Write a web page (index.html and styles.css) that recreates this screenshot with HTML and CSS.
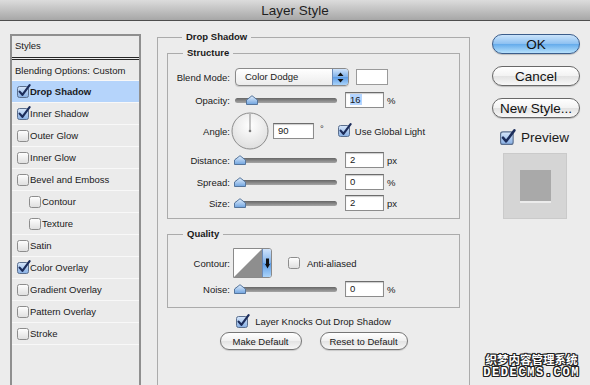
FILE: index.html
```html
<!DOCTYPE html>
<html lang="en">
<head>
   <meta charset="UTF-8">
   <meta name="viewport" content="width=device-width, initial-scale=1.0">
   <title>Layer Style</title>
   <link rel="stylesheet" href="styles.css">
</head>
<body>
<svg class="defs" aria-hidden="true">
   <defs>
      <linearGradient id="gBlue" x1="0" y1="0" x2="0" y2="1">
         <stop offset="0" stop-color="#d7e7fb"/>
         <stop offset="1" stop-color="#86aee3"/>
      </linearGradient>
      <linearGradient id="gGrey" x1="0" y1="0" x2="0" y2="1">
         <stop offset="0" stop-color="#ffffff"/>
         <stop offset="1" stop-color="#dedede"/>
      </linearGradient>
      <linearGradient id="gThumb" x1="0" y1="0" x2="0" y2="1">
         <stop offset="0" stop-color="#e4f0fd"/>
         <stop offset="1" stop-color="#6fa3df"/>
      </linearGradient>
      <radialGradient id="gDial" cx="0.5" cy="0.35" r="0.7">
         <stop offset="0" stop-color="#ffffff"/>
         <stop offset="1" stop-color="#dcdcdc"/>
      </radialGradient>
      <symbol id="cb-on" viewBox="0 0 14 14">
         <rect x="0.5" y="2.5" width="11" height="11" rx="2" fill="url(#gBlue)" stroke="#5b6f8e"/>
         <path d="M2.6 7.6 L5.4 10.8 L12.6 1.2" fill="none" stroke="#1c2d5b" stroke-width="2.2" stroke-linecap="round" stroke-linejoin="round"/>
      </symbol>
      <symbol id="cb-off" viewBox="0 0 14 14">
         <rect x="0.5" y="2.5" width="11" height="11" rx="2" fill="url(#gGrey)" stroke="#8d8d8d"/>
      </symbol>
      <symbol id="thumb" viewBox="0 0 12 10">
         <path d="M0.5 5 L6 0.7 L11.5 5 L11.5 9.5 L0.5 9.5 Z" fill="url(#gThumb)" stroke="#55759c"/>
      </symbol>
   </defs>
</svg>

<div class="window">
   <header class="titlebar">Layer Style</header>

   <div class="dialog">
      <aside class="styles">
         <div class="styles-head">Styles</div>
         <div class="style-item blending">Blending Options: Custom</div>
         <div class="style-item selected"><svg class="cb"><use href="#cb-on"/></svg>Drop Shadow</div>
         <div class="style-item"><svg class="cb"><use href="#cb-on"/></svg>Inner Shadow</div>
         <div class="style-item"><svg class="cb"><use href="#cb-off"/></svg>Outer Glow</div>
         <div class="style-item"><svg class="cb"><use href="#cb-off"/></svg>Inner Glow</div>
         <div class="style-item"><svg class="cb"><use href="#cb-off"/></svg>Bevel and Emboss</div>
         <div class="style-item sub"><svg class="cb"><use href="#cb-off"/></svg>Contour</div>
         <div class="style-item sub"><svg class="cb"><use href="#cb-off"/></svg>Texture</div>
         <div class="style-item"><svg class="cb"><use href="#cb-off"/></svg>Satin</div>
         <div class="style-item"><svg class="cb"><use href="#cb-on"/></svg>Color Overlay</div>
         <div class="style-item"><svg class="cb"><use href="#cb-off"/></svg>Gradient Overlay</div>
         <div class="style-item"><svg class="cb"><use href="#cb-off"/></svg>Pattern Overlay</div>
         <div class="style-item"><svg class="cb"><use href="#cb-off"/></svg>Stroke</div>
      </aside>

      <main class="settings">
         <fieldset class="group outer">
            <legend>Drop Shadow</legend>

            <fieldset class="group structure">
               <legend>Structure</legend>

               <div class="row row-blend">
                  <span class="lbl">Blend Mode:</span>
                  <span class="select">
                     <span class="select-text">Color Dodge</span>
                     <span class="stepper">
                        <svg width="7" height="11" viewBox="0 0 7 11"><path d="M3.5 0.5 L6.5 4 L0.5 4 Z M3.5 10.5 L6.5 7 L0.5 7 Z" fill="#111"/></svg>
                     </span>
                  </span>
                  <span class="swatch"></span>
               </div>

               <div class="row row-slider gap-6">
                  <span class="lbl">Opacity:</span>
                  <span class="slider"><span class="track"></span><svg class="thumb" style="left:11px"><use href="#thumb"/></svg></span>
                  <span class="num"><span class="sel">16</span></span>
                  <span class="unit">%</span>
               </div>

               <div class="row row-angle">
                  <span class="lbl">Angle:</span>
                  <svg class="dial" width="38" height="38" viewBox="0 0 38 38">
                     <circle cx="19" cy="19" r="18" fill="url(#gDial)" stroke="#8c8c8c"/>
                     <line x1="19" y1="19" x2="19" y2="2" stroke="#8a8a8a"/>
                     <circle cx="19" cy="19" r="1.3" fill="#7a7a7a"/>
                  </svg>
                  <span class="num angle-num">90</span>
                  <span class="deg">°</span>
                  <svg class="cb global-cb"><use href="#cb-on"/></svg>
                  <span>Use Global Light</span>
               </div>

               <div class="row row-slider gap-3">
                  <span class="lbl">Distance:</span>
                  <span class="slider"><span class="track"></span><svg class="thumb" style="left:-1px"><use href="#thumb"/></svg></span>
                  <span class="num">2</span>
                  <span class="unit">px</span>
               </div>

               <div class="row row-slider gap-6">
                  <span class="lbl">Spread:</span>
                  <span class="slider"><span class="track"></span><svg class="thumb" style="left:-1px"><use href="#thumb"/></svg></span>
                  <span class="num">0</span>
                  <span class="unit">%</span>
               </div>

               <div class="row row-slider gap-5">
                  <span class="lbl">Size:</span>
                  <span class="slider"><span class="track"></span><svg class="thumb" style="left:-1px"><use href="#thumb"/></svg></span>
                  <span class="num">2</span>
                  <span class="unit">px</span>
               </div>
            </fieldset>

            <fieldset class="group quality">
               <legend>Quality</legend>

               <div class="row row-contour">
                  <span class="lbl">Contour:</span>
                  <span class="contour">
                     <svg class="curve" width="28" height="28" viewBox="0 0 28 28"><polygon points="0,28 28,0 28,28" fill="#8e8e8e"/></svg>
                     <span class="contour-drop">
                        <svg width="5" height="11" viewBox="0 0 5 11"><path d="M1 0.5 L4 0.5 L4 6 L5 6 L2.5 10.5 L0 6 L1 6 Z" fill="#111"/></svg>
                     </span>
                  </span>
                  <svg class="cb aa-cb"><use href="#cb-off"/></svg>
                  <span>Anti-aliased</span>
               </div>

               <div class="row row-slider gap-3">
                  <span class="lbl">Noise:</span>
                  <span class="slider"><span class="track"></span><svg class="thumb" style="left:-1px"><use href="#thumb"/></svg></span>
                  <span class="num">0</span>
                  <span class="unit">%</span>
               </div>
            </fieldset>

            <div class="knock"><svg class="cb"><use href="#cb-on"/></svg><span>Layer Knocks Out Drop Shadow</span></div>

            <div class="defaults">
               <button type="button" class="small-btn make">Make Default</button>
               <button type="button" class="small-btn reset">Reset to Default</button>
            </div>
         </fieldset>
      </main>

      <div class="actions">
         <button type="button" class="btn ok">OK</button>
         <button type="button" class="btn">Cancel</button>
         <button type="button" class="btn">New Style...</button>
         <div class="preview-toggle"><svg class="cb big"><use href="#cb-on"/></svg><span>Preview</span></div>
         <div class="preview"><span class="preview-shape"></span></div>
      </div>
   </div>

   <div class="watermark">
      <div class="wm-cn">织梦内容管理系统</div>
      <div class="wm-en">DEDECMS.COM</div>
   </div>
</div>
</body>
</html>
```

FILE: styles.css
```css
body {
   margin: 0;
   font-family: "Liberation Sans", Arial, sans-serif;
   font-size: 9.5px;
   color: #1a1a1a;
   background-color: #ececec;
}
.defs {
   position: absolute;
   width: 0;
   height: 0;
}
.window {
   position: relative;
   width: 590px;
   height: 385px;
   overflow: hidden;
}
.titlebar {
   height: 20px;
   border-bottom: 1px solid #4e4e4e;
   background: linear-gradient(#dcdcdc, #a7a7a7);
   text-align: center;
   font-size: 13.5px;
   line-height: 21px;
   color: #1e1e1e;
}
.dialog {
   display: flex;
   align-items: flex-start;
   padding-left: 10px;
}

/* styles list */
.styles {
   width: 127px;
   height: 400px;
   margin-top: 13px;
   border: 2px solid #8f8f8f;
   background-color: #ebebeb;
}
.styles-head {
   height: 21px;
   line-height: 20px;
   padding-left: 3px;
   border-bottom: 3px double #262626;
}
.style-item {
   display: flex;
   align-items: center;
   height: 21px;
   padding-left: 5px;
   border-bottom: 1px solid #f8f8f8;
}
.style-item.blending {
   height: 20px;
   padding-left: 3px;
}
.style-item.sub {
   padding-left: 17px;
}
.style-item.selected {
   background-color: #b5d4fb;
   font-weight: bold;
}
.cb {
   width: 14px;
   height: 14px;
   flex: none;
   margin-right: -1px;
   margin-top: -2px;
}
.cb.big {
   width: 16px;
   height: 16px;
   margin-right: 5px;
}

/* settings */
.settings {
   width: 313px;
   margin-left: 16px;
   margin-top: 10px;
}
fieldset.group {
   margin: 0;
   padding: 0;
   min-width: 0;
   border: 1px solid #ababab;
}
fieldset.group legend {
   font-weight: bold;
   height: 12px;
   line-height: 12px;
   padding: 0 4px;
   margin-left: 15px;
}
.outer {
   height: 400px;
   padding: 0 9px !important;
}
.structure {
   margin-top: 4px !important;
   padding: 9px 0 7px !important;
}
.quality {
   margin-top: 9px !important;
   padding: 8px 0 10px !important;
}
.row {
   display: flex;
   align-items: center;
}
.lbl {
   width: 62px;
   margin-right: 5px;
   text-align: right;
   flex: none;
}
.row-blend {
   height: 18px;
}
.row-slider {
   height: 16px;
}
.gap-3 { margin-top: 3px; }
.gap-5 { margin-top: 5px; }
.gap-6 { margin-top: 6px; }
.row-angle {
   height: 36px;
   margin-top: 5px;
}
.row-contour {
   height: 30px;
}

.select {
   display: flex;
   width: 114px;
   height: 18px;
   box-sizing: border-box;
   border: 1px solid #8a8a8a;
   border-radius: 4px;
   background: linear-gradient(#ffffff, #ececec);
   box-shadow: 0 1px 1px rgba(0, 0, 0, 0.15);
}
.select-text {
   flex: 1;
   padding-left: 9px;
   line-height: 16px;
}
.stepper {
   display: flex;
   align-items: center;
   justify-content: center;
   width: 15px;
   border-left: 1px solid #6a8ab8;
   border-radius: 0 3px 3px 0;
   background: linear-gradient(#cfe3fb, #7fb1ea 50%, #5d9ce6 51%, #a9d3fa);
}
.swatch {
   width: 30px;
   height: 14px;
   margin-left: 7px;
   border: 1px solid #9a9a9a;
   background-color: #fff;
}

.slider {
   position: relative;
   width: 102px;
   height: 10px;
   flex: none;
}
.track {
   display: block;
   margin-top: 3px;
   height: 5px;
   border-radius: 3px;
   background: linear-gradient(#666, #a6a6a6);
}
.thumb {
   position: absolute;
   top: 0;
   width: 12px;
   height: 10px;
}
.num {
   width: 33px;
   height: 14px;
   margin-left: 8px;
   padding-left: 4px;
   line-height: 14px;
   border: 1px solid #8c8c8c;
   border-top-color: #6c6c6c;
   background-color: #fff;
   box-shadow: inset 0 1px 1px rgba(0, 0, 0, 0.2);
   flex: none;
}
.num .sel {
   background-color: #b5d5ff;
   padding-right: 1px;
}
.unit {
   margin-left: 3px;
}

.dial {
   margin-left: -4px;
   flex: none;
}
.num.angle-num {
   width: 35px;
   margin-left: 4px;
}
.deg {
   margin-left: 6px;
   margin-top: -6px;
   color: #333;
}
.global-cb {
   margin-left: 14px;
   margin-right: 3px;
}

.contour {
   display: flex;
   width: 39px;
   height: 30px;
   margin-left: -2px;
   box-sizing: border-box;
   border: 1px solid #8a8a8a;
   border-radius: 0 3px 3px 0;
   background-color: #fff;
   flex: none;
}
.curve {
   display: block;
}
.contour-drop {
   display: flex;
   align-items: center;
   justify-content: center;
   flex: 1;
   border-left: 1px solid #6a8ab8;
   border-radius: 0 2px 2px 0;
   background: linear-gradient(#cfe3fb, #7fb1ea 50%, #5d9ce6 51%, #a9d3fa);
}
.aa-cb {
   margin-left: 16px;
   margin-right: 5px;
}

.knock {
   display: flex;
   align-items: center;
   justify-content: center;
   height: 13px;
   margin-top: 7px;
}
.knock .cb {
   margin-right: 5px;
}
.defaults {
   display: flex;
   justify-content: center;
   gap: 18px;
   margin-top: 4px;
}
.small-btn {
   height: 18px;
   padding: 0;
   font-family: inherit;
   font-size: 9.5px;
   color: #1a1a1a;
   border: 1px solid #767676;
   border-radius: 9px;
   background: linear-gradient(#ffffff, #f0f0f0 50%, #e3e3e3 51%, #f7f7f7);
   box-shadow: 0 1px 1px rgba(0, 0, 0, 0.15);
}
.small-btn.make { width: 82px; }
.small-btn.reset { width: 88px; }

/* right column */
.actions {
   display: flex;
   flex-direction: column;
   width: 88px;
   margin-left: 22px;
   margin-top: 13px;
}
.btn {
   height: 20px;
   margin-bottom: 12px;
   padding: 0;
   font-family: inherit;
   font-size: 13.5px;
   line-height: 17px;
   color: #111;
   border: 1px solid #686868;
   border-radius: 10px;
   background: linear-gradient(#ffffff, #f2f2f2 50%, #e2e2e2 51%, #f8f8f8);
   box-shadow: 0 1px 1px rgba(0, 0, 0, 0.2);
}
.btn.ok {
   border-color: #3b5d8b;
   background: linear-gradient(#cbe4fb, #8cc0f1 50%, #64abeb 51%, #b7e1fc);
}
.preview-toggle {
   display: flex;
   align-items: center;
   height: 17px;
   margin-top: -1px;
   margin-left: 8px;
   font-size: 13.5px;
}
.preview {
   display: flex;
   align-items: center;
   justify-content: center;
   width: 64px;
   height: 66px;
   margin-top: 7px;
   margin-left: 11px;
   background-color: #d5d5d5;
   border: 1px solid #cacaca;
   box-sizing: border-box;
}
.preview-shape {
   width: 31px;
   height: 31px;
   background-color: #a9a9a9;
   border-bottom: 2px solid #ececec;
}

.watermark {
   position: absolute;
   right: 10px;
   bottom: 5px;
   text-align: center;
   color: #fff;
   font-weight: bold;
   text-shadow: 1px 0 0 #222, -1px 0 0 #222, 0 1px 0 #222, 0 -1px 0 #222, 1px 1px 0 #222, -1px -1px 0 #222, 1px -1px 0 #222, -1px 1px 0 #222;
}
.wm-cn {
   font-family: "Noto Sans CJK SC", sans-serif;
   font-size: 11.5px;
   line-height: 16px;
   height: 16px;
}
.wm-en {
   font-family: "Liberation Mono", monospace;
   font-size: 12px;
   line-height: 13px;
   height: 13px;
   letter-spacing: 1.6px;
}
```
